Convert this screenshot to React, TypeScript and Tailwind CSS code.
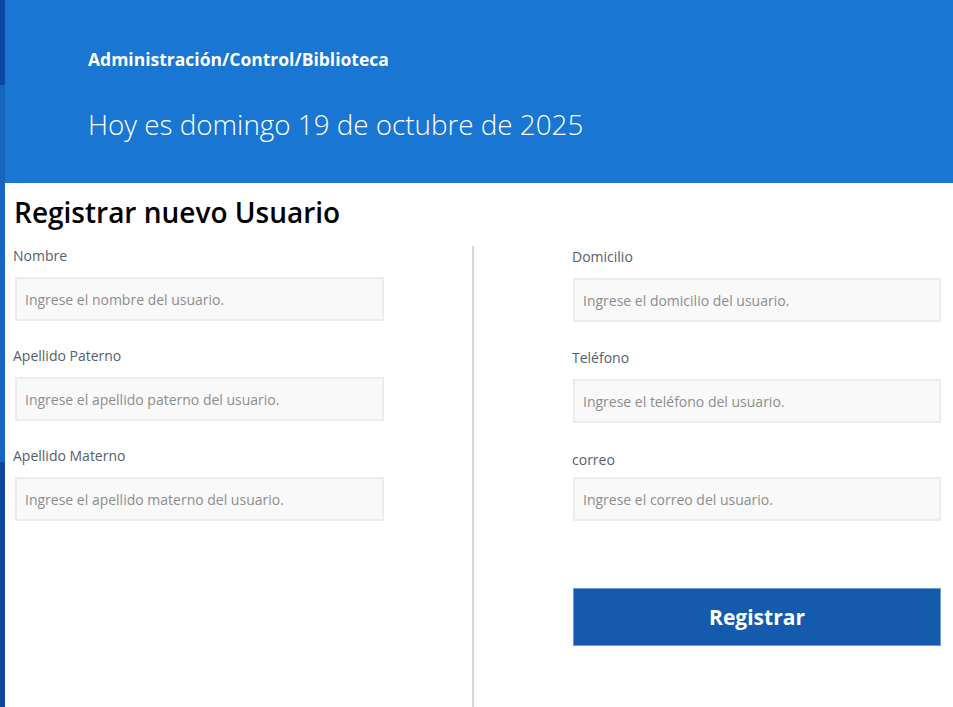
import React from "react";

const font = { fontFamily: '"Open Sans", "Noto Sans", Arial, sans-serif' };

type FieldProps = {
  label: string;
  placeholder: string;
  labelTop: string;
  inputTop: string;
  width: string;
};

function Field({ label, placeholder, labelTop, inputTop, width }: FieldProps) {
  return (
    <div>
      <label className={`block text-[14px] leading-[20px] text-[#52606b] ${labelTop}`}>
        {label}
      </label>
      <input
        type="text"
        placeholder={placeholder}
        className={`block h-[44px] border-2 border-[#ececec] bg-[#f9f9f9] px-[8px] text-[14px] text-[#333] outline-none placeholder:text-[#8d8d8d] ${inputTop} ${width}`}
      />
    </div>
  );
}

export default function App() {
  return (
    <div className="flex min-h-[707px] w-full bg-white" style={font}>
      {/* sidebar edge */}
      <aside className="flex w-[5px] shrink-0 flex-col">
        <div className="h-[85px] bg-[#0d47a1]" />
        <div className="h-[377px] bg-[#1565c0]" />
        <div className="flex-1 bg-[#0d47a1]" />
      </aside>

      <div className="flex-1">
        {/* Header */}
        <header className="h-[183px] bg-[#1976d2] pl-[83px] pt-[47px] text-white">
          <div className="text-[17.5px] font-bold leading-[24px]">
            Administración/Control/Biblioteca
          </div>
          <div className="mt-[35px] text-[27.8px] font-light leading-[36px]">
            Hoy es domingo 19 de octubre de 2025
          </div>
        </header>

        {/* Content */}
        <main>
          <h1 className="mt-[11px] pl-[9px] text-[28px] font-semibold leading-[36px] text-black">
            Registrar nuevo Usuario
          </h1>

          <div className="mt-[16px] flex">
            <div className="h-[461px] w-[469px] border-r-2 border-[#d6d6d6] pl-[8px]">
              <Field
                label="Nombre"
                placeholder="Ingrese el nombre del usuario."
                labelTop="mt-0"
                inputTop="mt-[11px] ml-[2px]"
                width="w-[369px]"
              />
              <Field
                label="Apellido Paterno"
                placeholder="Ingrese el apellido paterno del usuario."
                labelTop="mt-[25px]"
                inputTop="mt-[11px] ml-[2px]"
                width="w-[369px]"
              />
              <Field
                label="Apellido Materno"
                placeholder="Ingrese el apellido materno del usuario."
                labelTop="mt-[25px]"
                inputTop="mt-[11px] ml-[2px]"
                width="w-[369px]"
              />
            </div>

            <div className="pl-[98px]">
              <Field
                label="Domicilio"
                placeholder="Ingrese el domicilio del usuario."
                labelTop="mt-[1px]"
                inputTop="mt-[11px] ml-[1px]"
                width="w-[368px]"
              />
              <Field
                label="Teléfono"
                placeholder="Ingrese el teléfono del usuario."
                labelTop="mt-[26px]"
                inputTop="mt-[11px] ml-[1px]"
                width="w-[368px]"
              />
              <Field
                label="correo"
                placeholder="Ingrese el correo del usuario."
                labelTop="mt-[27px]"
                inputTop="mt-[7px] ml-[1px]"
                width="w-[368px]"
              />
              <button
                type="button"
                className="ml-[1px] mt-[67px] h-[58px] w-[368px] border border-[#6f9bd0] bg-[#155bad] pt-[2px] text-[21px] font-bold text-white"
              >
                Registrar
              </button>
            </div>
          </div>
        </main>
      </div>
    </div>
  );
}
